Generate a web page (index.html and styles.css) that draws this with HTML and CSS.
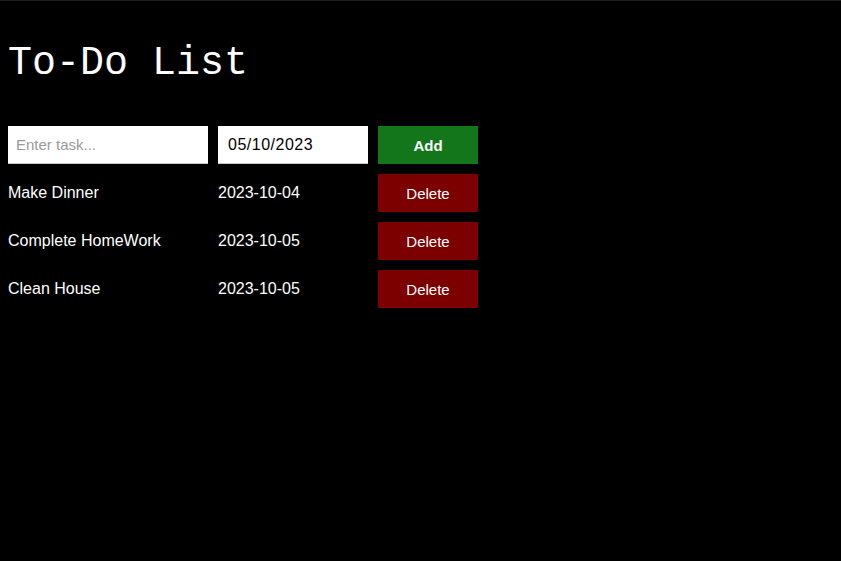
FILE: index.html
```html
<!DOCTYPE html>
<html lang="en">
<head>
<meta charset="utf-8">
<title>To-Do List</title>
<link rel="stylesheet" href="styles.css">
</head>
<body>
<div class="app">
  <h1 class="title">To-Do List</h1>
  <div class="list">
    <div class="row">
      <input class="task-input" type="text" placeholder="Enter task...">
      <div class="date-input">05/10/2023</div>
      <button class="btn btn-add">Add</button>
    </div>
    <div class="row">
      <span class="task-name">Make Dinner</span>
      <span class="task-date">2023-10-04</span>
      <button class="btn btn-delete">Delete</button>
    </div>
    <div class="row">
      <span class="task-name">Complete HomeWork</span>
      <span class="task-date">2023-10-05</span>
      <button class="btn btn-delete">Delete</button>
    </div>
    <div class="row">
      <span class="task-name">Clean House</span>
      <span class="task-date">2023-10-05</span>
      <button class="btn btn-delete">Delete</button>
    </div>
  </div>
</div>
</body>
</html>
```
FILE: styles.css
```css
html {
  background: #000;
  border-top: 1px solid #1e1e1e;
}
body {
  margin: 0;
  background: #000;
  color: #fff;
  font-family: "Liberation Sans", Arial, sans-serif;
}
.app {
  padding: 0 8px;
}
.title {
  margin: 40px 0 40px 0;
  font-family: "Liberation Mono", "Courier New", monospace;
  font-weight: normal;
  font-size: 40px;
  line-height: 45px;
  color: #fff;
}
.list {
  display: flex;
  flex-direction: column;
  gap: 10px;
}
.row {
  display: flex;
  align-items: center;
  gap: 10px;
  height: 38px;
}
.task-input {
  box-sizing: border-box;
  width: 200px;
  height: 38px;
  margin: 0;
  border: none;
  border-bottom: 1px solid #c8c8c8;
  padding: 0 8px;
  font-family: "Liberation Sans", Arial, sans-serif;
  font-size: 15px;
  color: #000;
  background: #fff;
  outline: none;
}
.task-input::placeholder {
  color: #9a9a9a;
}
.date-input {
  box-sizing: border-box;
  width: 150px;
  height: 38px;
  display: flex;
  align-items: center;
  padding: 0 10px;
  background: #fff;
  border-bottom: 1px solid #c8c8c8;
  color: #000;
  font-size: 16px;
  letter-spacing: 0.5px;
}
.task-name {
  width: 200px;
  font-size: 16px;
}
.task-date {
  width: 150px;
  font-size: 16px;
}
.btn {
  box-sizing: border-box;
  width: 100px;
  height: 38px;
  margin: 0;
  border: none;
  padding: 0;
  color: #fff;
  font-family: "Liberation Sans", Arial, sans-serif;
  font-size: 15px;
  cursor: pointer;
}
.btn-add {
  background: #13761a;
  font-weight: bold;
}
.btn-delete {
  background: #7d0000;
}
```
